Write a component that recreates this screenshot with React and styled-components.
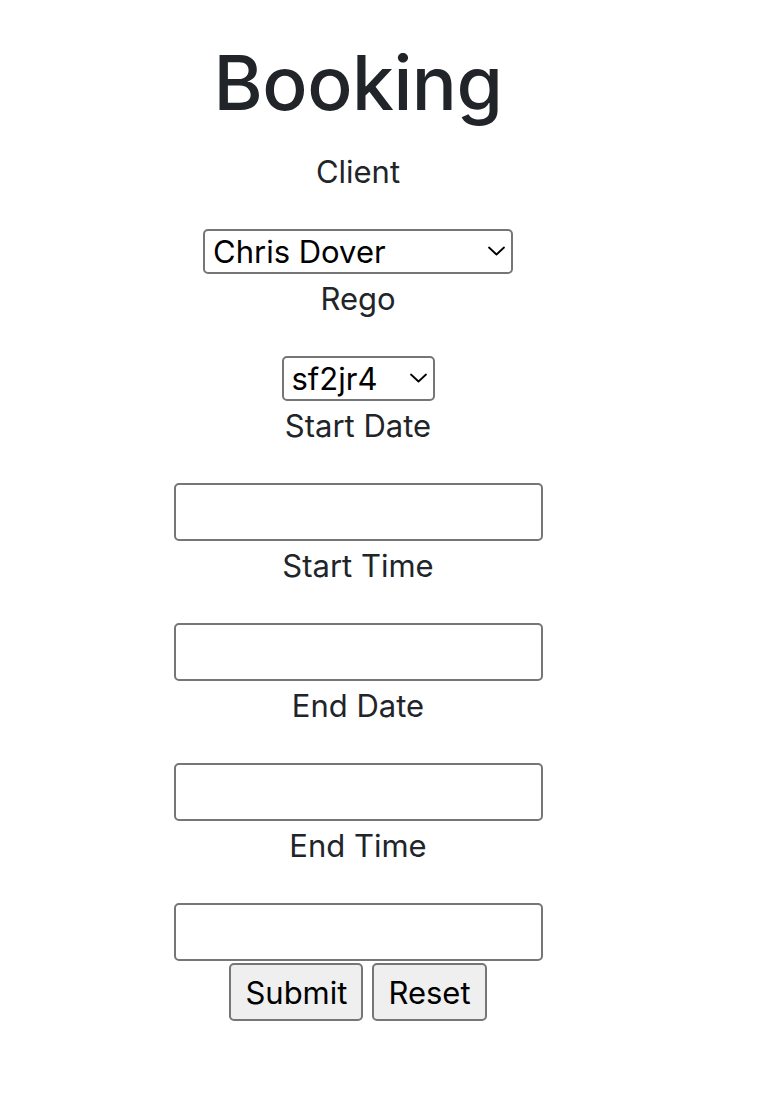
import React from 'react'
import styled, { createGlobalStyle } from 'styled-components'

const GlobalStyle = createGlobalStyle`
  html, body {
    margin: 0;
    padding: 0;
    background: #fff;
  }
  body {
    font-family: Inter, "Liberation Sans", Arial, sans-serif;
    color: #212529;
  }
`

const Page = styled.div`
  width: 716px;
  padding-top: 35px;
  display: flex;
  flex-direction: column;
  align-items: center;
  text-align: center;
`

const Title = styled.h1`
  margin: 0 0 16px;
  font-size: 75px;
  font-weight: 500;
  line-height: 96px;
  letter-spacing: -0.5px;
`

const Form = styled.form`
  display: flex;
  flex-direction: column;
  align-items: center;
`

const Label = styled.label`
  display: block;
  margin: 1px 0 33px;
  font-size: 31px;
  line-height: 48px;
`

const SelectWrap = styled.div`
  position: relative;
  width: ${p => p.width}px;
  height: 45px;
`

const Select = styled.select`
  appearance: none;
  -webkit-appearance: none;
  box-sizing: border-box;
  width: 100%;
  height: 100%;
  margin: 0;
  padding: 0 40px 0 8px;
  border: 2px solid #767676;
  border-radius: 5px;
  background: #fff;
  color: #000;
  font-family: Inter, "Liberation Sans", Arial, sans-serif;
  font-size: 31px;
  line-height: 40px;
`

const Chevron = styled.svg`
  position: absolute;
  right: 8px;
  top: 17px;
  width: 17px;
  height: 10px;
  pointer-events: none;
`

const Input = styled.input`
  box-sizing: border-box;
  width: 369px;
  height: 58px;
  margin: 0;
  padding: 2px 4px;
  border: 2px solid #767676;
  border-radius: 5px;
  background: #fff;
  font-size: 26px;
`

const Buttons = styled.div`
  display: flex;
  gap: 9px;
  margin-top: 2px;
`

const Button = styled.button`
  box-sizing: border-box;
  height: 58px;
  padding: 0 14px;
  border: 2px solid #767676;
  border-radius: 5px;
  background: #efefef;
  color: #000;
  font-family: Inter, "Liberation Sans", Arial, sans-serif;
  font-size: 31px;
  line-height: 1;
`

function Dropdown({ width, options }) {
  return (
    <SelectWrap width={width}>
      <Select defaultValue={options[0]}>
        {options.map(o => <option key={o}>{o}</option>)}
      </Select>
      <Chevron viewBox="0 0 17 10">
        <path d="M1 1.5 L8.5 8.5 L16 1.5" fill="none" stroke="#000" strokeWidth="1.8" strokeLinecap="round" strokeLinejoin="round" />
      </Chevron>
    </SelectWrap>
  )
}

export default function App() {
  return (
    <Page>
      <GlobalStyle />
      <Title>Booking</Title>
      <Form onSubmit={e => e.preventDefault()}>
        <Label>Client</Label>
        <Dropdown width={310} options={['Chris Dover']} />
        <Label>Rego</Label>
        <Dropdown width={153} options={['sf2jr4']} />
        <Label>Start Date</Label>
        <Input type="text" />
        <Label>Start Time</Label>
        <Input type="text" />
        <Label>End Date</Label>
        <Input type="text" />
        <Label>End Time</Label>
        <Input type="text" />
        <Buttons>
          <Button type="submit">Submit</Button>
          <Button type="reset">Reset</Button>
        </Buttons>
      </Form>
    </Page>
  )
}
